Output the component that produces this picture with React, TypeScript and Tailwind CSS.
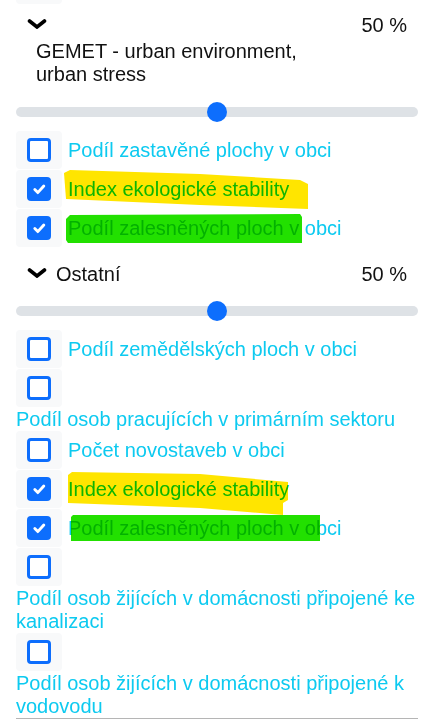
import React from 'react';

type Item = { label: string; checked?: boolean };

const ostatni: Item[] = [
  { label: 'Podíl zemědělských ploch v obci' },
  { label: 'Podíl osob pracujících v primárním sektoru' },
  { label: 'Počet novostaveb v obci' },
  { label: 'Index ekologické stability', checked: true },
  { label: 'Podíl zalesněných ploch v obci', checked: true },
  { label: 'Podíl osob žijících v domácnosti připojené ke kanalizaci' },
  { label: 'Podíl osob žijících v domácnosti připojené k vodovodu' },
];

const gemet: Item[] = [
  { label: 'Podíl zastavěné plochy v obci' },
  { label: 'Index ekologické stability', checked: true },
  { label: 'Podíl zalesněných ploch v obci', checked: true },
];

function Chevron() {
  return (
    <svg width="20" height="10" viewBox="0 0 20 10" className="block">
      <polyline points="2.5,2 10,8 17.5,2" fill="none" stroke="#000" strokeWidth="3.6" strokeLinecap="round" strokeLinejoin="miter" />
    </svg>
  );
}

function Checkbox({ checked }: { checked?: boolean }) {
  return (
    <span className="mr-[6px] mb-px flex h-[38px] w-[46px] shrink-0 items-center justify-center rounded-[4px] bg-[#f8f9fa]">
      {checked ? (
        <span className="block h-6 w-6 rounded-[4px] bg-[#0d6efd]">
          <svg viewBox="0 0 20 20" width="24" height="24" className="block">
            <path d="m6.5 10.5 2.5 2.5 5-5.5" fill="none" stroke="#fff" strokeWidth="2.4" strokeLinecap="round" strokeLinejoin="round" />
          </svg>
        </span>
      ) : (
        <span className="block h-6 w-6 rounded-[4px] border-[3px] border-[#0d6efd] bg-white" />
      )}
    </span>
  );
}

function Slider({ className }: { className: string }) {
  return (
    <div className={`relative flex h-[30px] items-center ${className}`}>
      <div className="h-[10px] w-full rounded-full bg-[#dee2e6]" />
      <div className="absolute left-[191px] top-[5px] h-5 w-5 rounded-full bg-[#0d6efd]" />
    </div>
  );
}

function Section({ title, items, top, sliderTop }: { title: string; items: Item[]; top: string; sliderTop: string }) {
  return (
    <div className={top}>
      <div className="flex items-start justify-between pr-[11px]">
        <div className="flex min-w-0 flex-1 flex-wrap items-start pl-5">
          <span className="-ml-[9px] mr-[9px] h-[26px] pt-[5px]">
            <Chevron />
          </span>
          <span className="max-w-[310px] leading-[23px]">{title}</span>
        </div>
        <span className="shrink-0 leading-[23px]">50 %</span>
      </div>
      <Slider className={sliderTop} />
      <div className="mt-[4px]">
        {items.map((it, i) => (
          <div key={i} className="flex flex-wrap items-center">
            <Checkbox checked={it.checked} />
            <label className="leading-[23px] text-[#0dcaf0]">{it.label}</label>
          </div>
        ))}
      </div>
    </div>
  );
}

export default function App() {
  return (
    <div className="relative isolate h-[728px] w-[430px] overflow-hidden bg-white pl-4 pr-3 text-[20px] text-[#111] font-['Liberation_Sans',Arial,sans-serif]">
      <div className="h-[4px] w-[46px] rounded-b-[4px] bg-[#f8f9fa]" />
      <Section title="GEMET - urban environment, urban stress" items={gemet} top="mt-[10px]" sliderTop="mt-[11px]" />
      <Section title="Ostatní" items={ostatni} top="mt-[15px]" sliderTop="mt-[7px]" />
      <div className="border-t border-[#b5b5b5]" />

      {/* marker highlights drawn over the list */}
      <svg className="pointer-events-none absolute left-0 top-0 mix-blend-multiply" width="430" height="728" viewBox="0 0 430 728">
        <polygon points="64,173 70,170 200,174 300,180 308,184 308,209 200,205 66,199" fill="#ffe500" />
        <polygon points="66,219 70,215 300,214 302,217 302,243 68,243 66,240" fill="#22e000" />
        <polygon points="68,475 72,472 200,474 288,482 288,500 283,503 283,515 200,508 68,503" fill="#ffe500" />
        <polygon points="71,517 73,515 320,515 320,541 71,541" fill="#22e000" />
      </svg>
    </div>
  );
}
